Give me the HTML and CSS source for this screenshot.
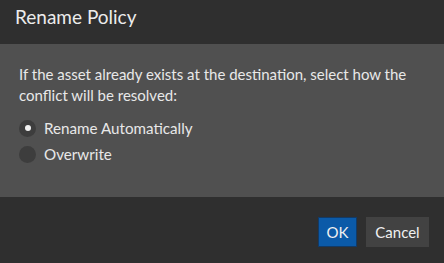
FILE: index.html
```html
<!DOCTYPE html>
<html>
<head>
<meta charset="utf-8">
<link rel="stylesheet" href="styles.css">
</head>
<body>
<div class="dialog">
  <div class="header">Rename Policy</div>
  <div class="content">
    <p class="desc">If the asset already exists at the destination, select how the conflict will be resolved:</p>
    <label class="option"><span class="radio checked"></span>Rename Automatically</label>
    <label class="option"><span class="radio"></span>Overwrite</label>
  </div>
  <div class="footer">
    <button class="btn ok">OK</button>
    <button class="btn cancel">Cancel</button>
  </div>
</div>
</body>
</html>
```
FILE: styles.css
```css
html, body { margin: 0; padding: 0; }
body { width: 444px; height: 263px; background: #2f2f2f; font-family: Lato, "Open Sans", sans-serif; color: #e6e6e6; overflow: hidden; }
.dialog { display: flex; flex-direction: column; height: 263px; }
.header { height: 44px; box-sizing: border-box; padding: 5px 15px 0; font-size: 19px; line-height: 24px; color: #ececec; background: #2f2f2f; }
.content { height: 153px; box-sizing: border-box; background: #505050; padding: 20px 19px 0; }
.desc { margin: 0 0 9px; font-size: 15px; line-height: 21px; color: #e8e8e8; }
.option { display: flex; align-items: center; height: 26px; font-size: 15.2px; color: #e8e8e8; }
.radio { width: 17px; height: 17px; border-radius: 50%; background: #3d3d3d; margin-right: 8px; display: flex; align-items: center; justify-content: center; }
.radio.checked::after { content: ""; width: 6px; height: 6px; border-radius: 50%; background: #f2f2f2; }
.footer { flex: 1; display: flex; justify-content: flex-end; align-items: flex-start; gap: 9px; padding: 20px 15px 0; background: #2f2f2f; }
.btn { height: 30px; font-family: Lato, "Open Sans", sans-serif; font-size: 15px; color: #f0f0f0; border: none; padding: 0; }
.ok { width: 39px; background: #0b5aa8; border: 1px solid #123a66; }
.cancel { width: 63px; background: #424242; }
```
